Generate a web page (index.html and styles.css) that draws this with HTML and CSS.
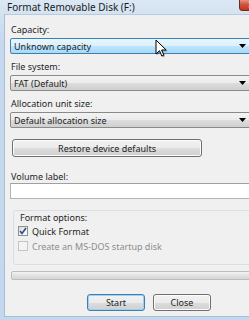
FILE: index.html
```html
<!DOCTYPE html>
<html lang="en">

<head>
    <meta charset="UTF-8">
    <meta name="viewport" content="width=device-width, initial-scale=1.0">
    <title>Format Removable Disk (F:)</title>

    <link rel="stylesheet" href="styles.css">
</head>

<body>
    <div class="window">
        <div class="titlebar">
            <span class="title">Format Removable Disk (F:)</span>
            <span class="close-btn">
                <svg width="8" height="7" viewBox="0 0 8 7"><path d="M1 0.5l6 6M7 0.5l-6 6" stroke="#fff" stroke-width="1.6"/></svg>
            </span>
        </div>
        <div class="client">
            <div class="label first">Capacity:</div>
            <div class="combo hot">
                <span>Unknown capacity</span>
                <svg class="arrow" width="7" height="4" viewBox="0 0 7 4"><path d="M0 0h7L3.5 4z" fill="#000"/></svg>
            </div>

            <div class="label">File system:</div>
            <div class="combo">
                <span>FAT (Default)</span>
                <svg class="arrow" width="7" height="4" viewBox="0 0 7 4"><path d="M0 0h7L3.5 4z" fill="#000"/></svg>
            </div>

            <div class="label">Allocation unit size:</div>
            <div class="combo">
                <span>Default allocation size</span>
                <svg class="arrow" width="7" height="4" viewBox="0 0 7 4"><path d="M0 0h7L3.5 4z" fill="#000"/></svg>
            </div>

            <button class="btn restore">Restore device defaults</button>

            <div class="label vol">Volume label:</div>
            <div class="textbox"></div>

            <div class="group">
                <div class="legend">Format options:</div>
                <div class="check">
                    <span class="box checked">
                        <svg width="8" height="8" viewBox="0 0 8 8"><path d="M1 4l2 2.5L7 1" fill="none" stroke="#2c4f8a" stroke-width="1.6"/></svg>
                    </span>
                    <span>Quick Format</span>
                </div>
                <div class="check disabled">
                    <span class="box"></span>
                    <span>Create an MS-DOS startup disk</span>
                </div>
            </div>

            <div class="progress"></div>

            <div class="actions">
                <button class="btn default">Start</button>
                <button class="btn">Close</button>
            </div>
        </div>

        <svg class="cursor" width="12" height="19" viewBox="0 0 12 19">
            <path d="M1 1v14l3.5-3.3 2.3 5.3 2-.9-2.2-5.1h4.6z" fill="#fff" stroke="#000" stroke-width="1" stroke-linejoin="round"/>
        </svg>
    </div>
</body>

</html>
```

FILE: styles.css
```css
* {
    padding: 0;
    margin: 0;
    box-sizing: border-box;
}

body {
    width: 249px;
    height: 320px;
    overflow: hidden;
    background: #c9dbee;
    font-family: "Noto Sans", "Liberation Sans", sans-serif;
    font-size: 9px;
    line-height: 11px;
    color: #1e1e1e;
}

.window {
    position: relative;
    width: 272px;
    height: 320px;
    padding: 0 0 3px 4px;
    display: flex;
    flex-direction: column;
    background: linear-gradient(#dbe7f4, #c6d9ee 40px, #c3d7ee);
}

.titlebar {
    height: 14px;
    display: flex;
    align-items: center;
    position: relative;
}

.titlebar .title {
    padding-left: 3px;
    font-size: 10px;
    color: #1b1b1b;
}

.close-btn {
    position: absolute;
    left: 235px;
    top: -2px;
    width: 26px;
    height: 13px;
    border: 1px solid #6d2a22;
    border-radius: 0 0 3px 3px;
    background: linear-gradient(#e8a08e, #d0553d 50%, #c2351c);
    display: flex;
    align-items: center;
    justify-content: center;
}

.client {
    flex: 1;
    background: #f0f0f0;
    border-left: 1px solid #a9bdd4;
    border-top: 1px solid #b8cade;
    border-bottom: 1px solid #a9bdd4;
    padding-left: 5px;
}

.label {
    padding-left: 1px;
    margin-top: 7px;
    height: 11px;
}

.label.first {
    margin-top: 9px;
}

.combo {
    margin-top: 3px;
    width: 242px;
    height: 16px;
    border: 1px solid #8a8a8a;
    border-radius: 2px;
    background: linear-gradient(#f3f3f3, #ebebeb 50%, #dddddd 51%, #cfcfcf);
    display: flex;
    align-items: center;
    justify-content: space-between;
    padding: 0 5px 0 3px;
}

.combo.hot {
    border-color: #3c7fb1;
    background: linear-gradient(#eaf6fd, #d9f0fc 50%, #bee6fd 51%, #a7d9f5);
}

.combo .arrow {
    display: block;
}

.btn {
    font-family: inherit;
    font-size: 9px;
    color: #1e1e1e;
    height: 18px;
    border: 1px solid #707070;
    border-radius: 3px;
    background: linear-gradient(#f2f2f2, #ebebeb 50%, #dddddd 51%, #cfcfcf);
    box-shadow: inset 0 0 0 1px #fcfcfc;
}

.restore {
    display: block;
    margin: 11px 0 0 2px;
    width: 190px;
}

.label.vol {
    margin-top: 14px;
}

.textbox {
    margin-top: 1px;
    width: 250px;
    height: 16px;
    background: #fff;
    border: 1px solid #b5b5b5;
    border-top-color: #a0a0a0;
}

.group {
    margin: 11px 0 0 3px;
    width: 250px;
    height: 55px;
    border: 1px solid #d5dfe5;
    border-radius: 3px;
    padding: 0 0 0 4px;
}

.group .legend {
    margin-top: 1px;
    padding-left: 2px;
}

.check {
    display: flex;
    align-items: center;
    gap: 4px;
    height: 10px;
    margin-top: 3px;
}

.check + .check {
    margin-top: 5px;
}

.check .box {
    width: 10px;
    height: 10px;
    border: 1px solid #8e8f8f;
    background: linear-gradient(135deg, #dcdcdc, #fdfdfd);
    display: flex;
    align-items: center;
    justify-content: center;
}

.check.disabled {
    color: #8d8d8d;
}

.check.disabled .box {
    border-color: #c4c4c4;
    background: #f4f4f4;
}

.progress {
    margin: 6px 0 0 1px;
    width: 250px;
    height: 9px;
    border: 1px solid #bcbcbc;
    border-radius: 2px;
    background: linear-gradient(#f3f3f3, #e2e2e2 50%, #d6d6d6);
}

.actions {
    display: flex;
    gap: 8px;
    margin: 14px 0 0 77px;
}

.actions .btn {
    width: 58px;
    height: 17px;
}

.btn.default {
    border-color: #3c7fb1;
    box-shadow: inset 0 0 0 1px #9bd1f3;
}

.cursor {
    position: absolute;
    left: 155px;
    top: 39px;
    filter: drop-shadow(1px 1px 0 rgba(0, 0, 0, 0.25));
}
```
